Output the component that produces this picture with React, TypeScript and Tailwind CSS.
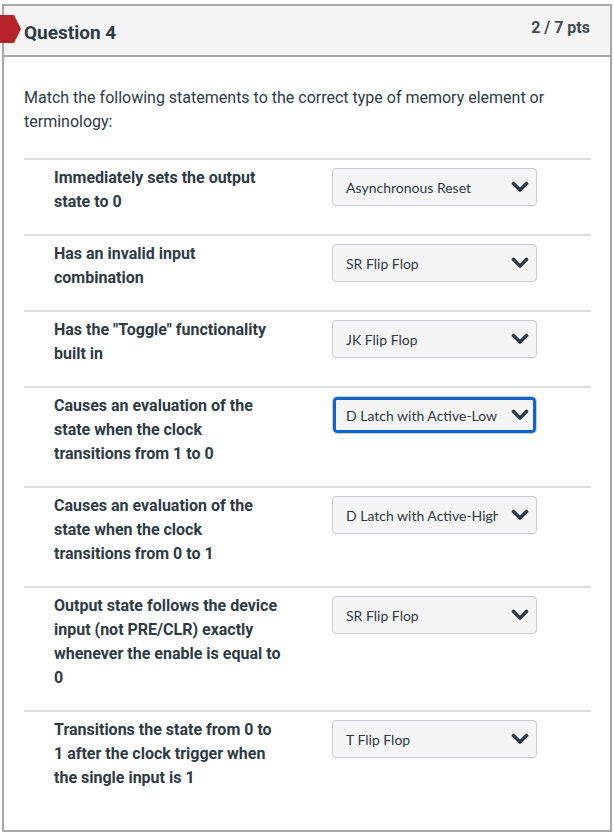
import React from 'react'

/**
 * Quiz question card: match statements to memory elements.
 */

type Row = {
    label: string
    answer: string
    focused?: boolean
}

const rows: Row[] = [
    { label: 'Immediately sets the output state to 0', answer: 'Asynchronous Reset' },
    { label: 'Has an invalid input combination', answer: 'SR Flip Flop' },
    { label: 'Has the "Toggle" functionality built in', answer: 'JK Flip Flop' },
    {
        label: 'Causes an evaluation of the state when the clock transitions from 1 to 0',
        answer: 'D Latch with Active-Low',
        focused: true,
    },
    {
        label: 'Causes an evaluation of the state when the clock transitions from 0 to 1',
        answer: 'D Latch with Active-High',
    },
    {
        label: 'Output state follows the device input (not PRE/CLR) exactly whenever the enable is equal to 0',
        answer: 'SR Flip Flop',
    },
    {
        label: 'Transitions the state from 0 to 1 after the clock trigger when the single input is 1',
        answer: 'T Flip Flop',
    },
]

function Chevron() {
    return (
        <svg width="18" height="12" viewBox="0 0 18 12" fill="none">
            <polyline
                points="2.5,2.5 9,9 15.5,2.5"
                stroke="#2d3b45"
                strokeWidth="3.6"
                strokeLinecap="round"
                strokeLinejoin="round"
            />
        </svg>
    )
}

function FakeSelect({ value, focused }: { value: string; focused?: boolean }) {
    return (
        <div
            className={
                focused
                    ? 'flex h-[38px] w-[205px] items-center rounded-[5px] border border-[#c7cdd1] bg-[#f5f5f5] shadow-[inset_0_0_0_3px_#0e66cc]'
                    : 'flex h-[38px] w-[205px] items-center rounded-[4px] border border-[#c7cdd1] bg-[#f5f5f5]'
            }
        >
            <span className="w-[165px] shrink-0 overflow-hidden whitespace-nowrap pl-[13px] font-['Lato'] text-[14px] text-[#2d3b45]">
                {value}
            </span>
            <span className="ml-[13px] flex items-center">
                <Chevron />
            </span>
        </div>
    )
}

export default function App() {
    return (
        <div className="min-h-[836px] bg-white pl-[2px] pt-[4px] font-['Roboto',sans-serif] text-[#2d3b45]">
            <div className="h-[828px] w-[610px] border-2 border-[#a8a8a8] bg-white">
                {/* Header */}
                <div className="relative flex h-[51px] items-start justify-between border-b-2 border-[#a8a8a8] bg-[#f5f5f5] pl-[20px] pr-[20px]">
                    {/* red flag marker */}
                    <svg
                        className="absolute left-[-4px] top-[9px]"
                        width="22"
                        height="28"
                        viewBox="0 0 22 28"
                    >
                        <polygon points="0,0 14,0 21,14 14,28 0,28" fill="#b8232b" />
                    </svg>
                    <h2 className="pt-[15px] text-[19px] font-bold leading-[24px] text-[#2d3b45]">Question 4</h2>
                    <div className="pt-[12px] text-[16px] font-bold leading-[20px] text-[#3f4a52]">2 / 7 pts</div>
                </div>

                {/* Body */}
                <div className="px-[20px] pt-[29px]">
                    <p className="w-[540px] text-[16px] leading-[24px]">
                        Match the following statements to the correct type of memory element or terminology:
                    </p>

                    <div className="mt-[24px] w-[567px]">
                        {rows.map((row, i) => (
                            <div key={i} className="flex border-t-2 border-[#dcdfe1] pb-[20px] pl-[30px] pt-[6px]">
                                <div className="w-[228px] shrink-0 text-[16px] font-bold leading-[24px] text-[#2d3b45]">
                                    {row.label}
                                </div>
                                <div className="ml-[50px] pt-[2px]">
                                    <FakeSelect value={row.answer} focused={row.focused} />
                                </div>
                            </div>
                        ))}
                    </div>
                </div>
            </div>
        </div>
    )
}
